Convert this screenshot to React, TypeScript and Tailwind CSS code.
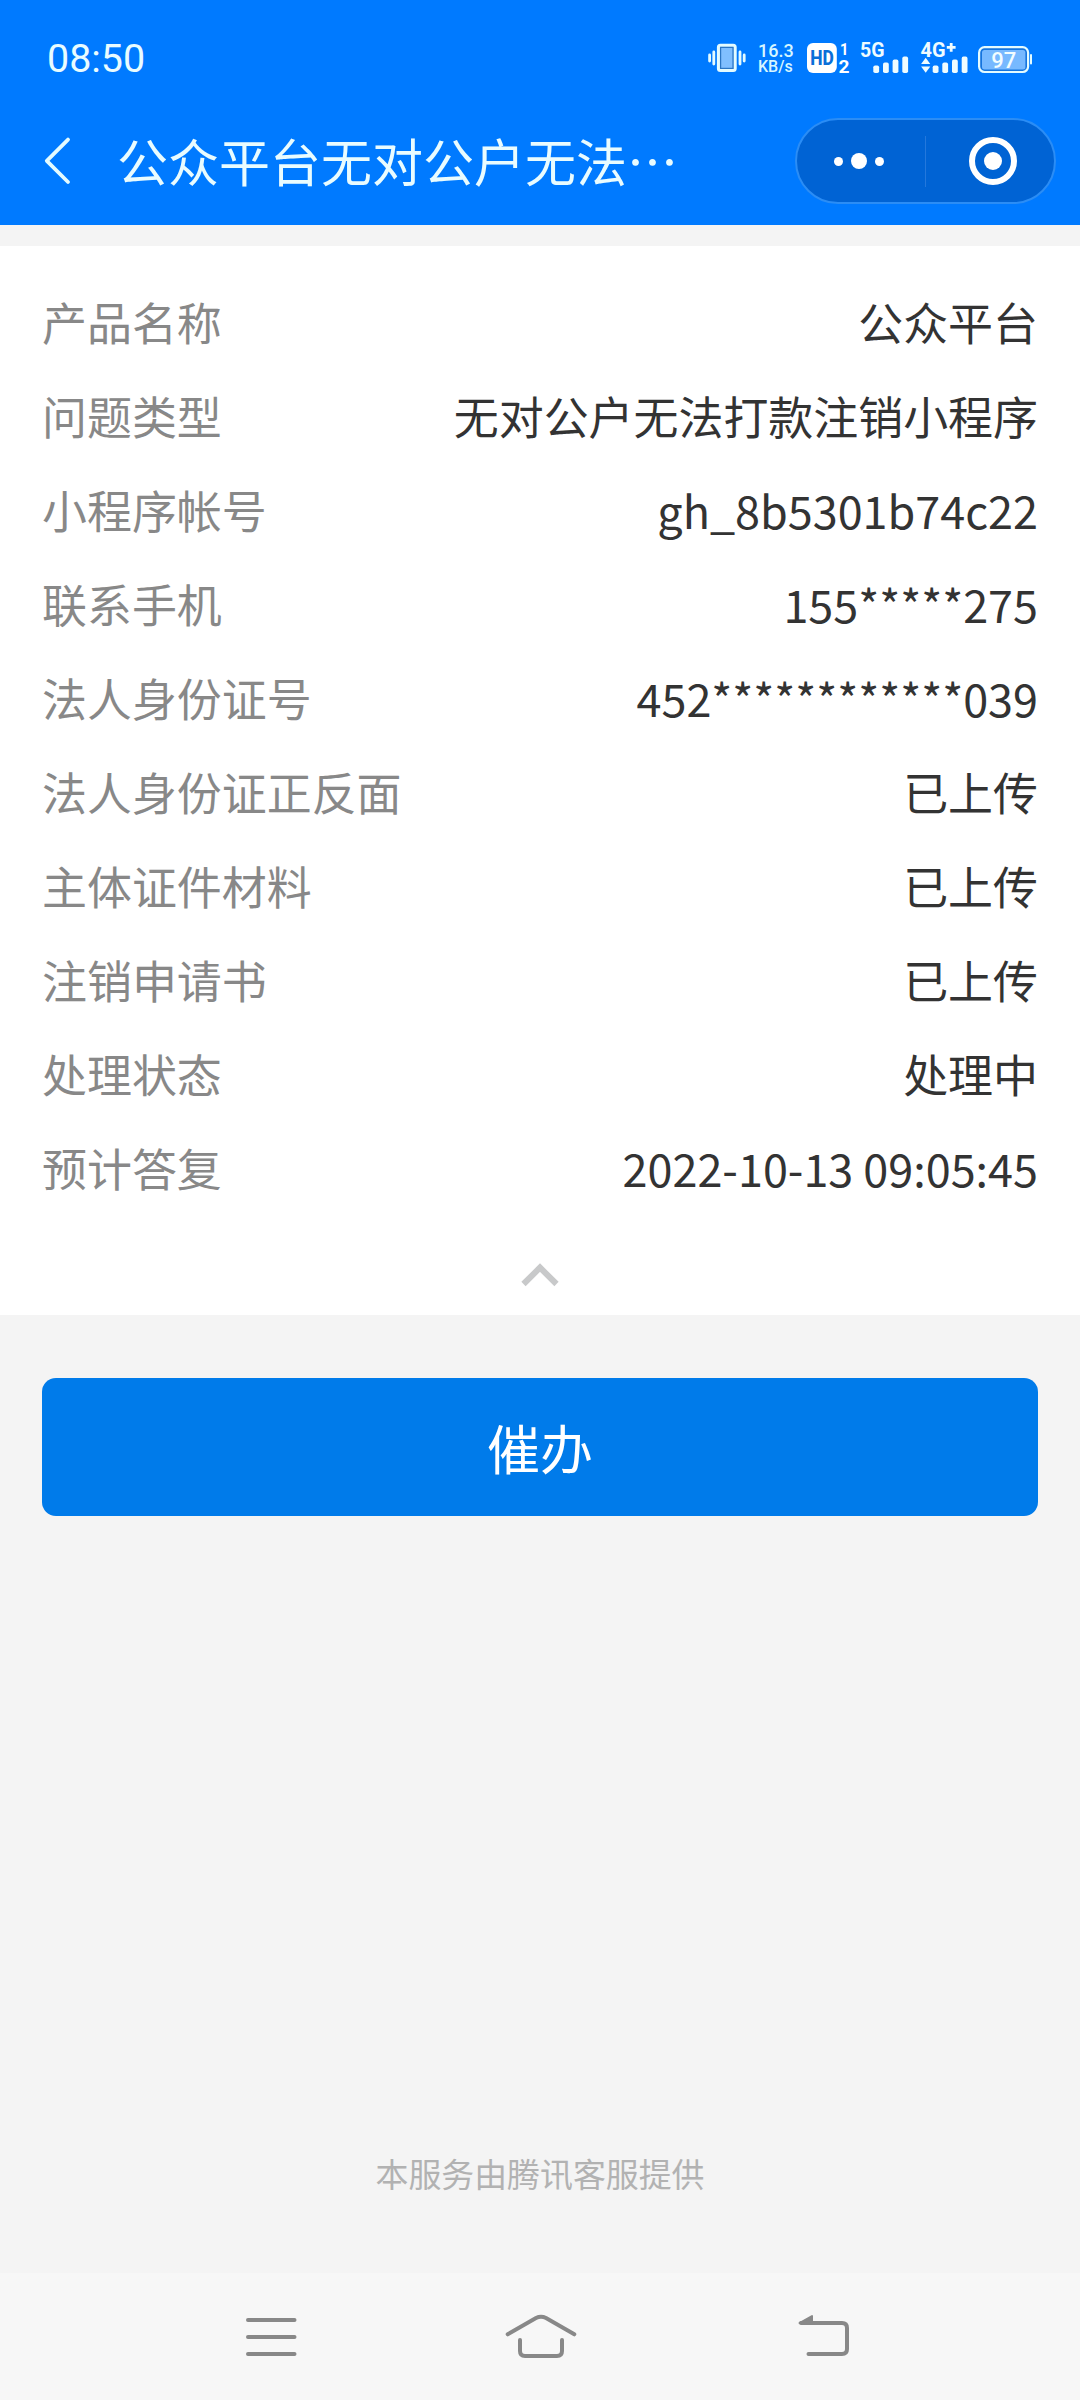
import React from "react";

const rows: [string, string][] = [
  ["产品名称", "公众平台"],
  ["问题类型", "无对公户无法打款注销小程序"],
  ["小程序帐号", "gh_8b5301b74c22"],
  ["联系手机", "155*****275"],
  ["法人身份证号", "452************039"],
  ["法人身份证正反面", "已上传"],
  ["主体证件材料", "已上传"],
  ["注销申请书", "已上传"],
  ["处理状态", "处理中"],
  ["预计答复", "2022-10-13 09:05:45"],
];

function VibrateIcon() {
  return (
    <svg width="38" height="34" viewBox="708 41 38 34" fill="none" stroke="#e3fbff">
      <rect x="718.4" y="45.2" width="16.8" height="25.4" rx="2" fill="#80bfff" strokeWidth="3" />
      <rect x="720.6" y="47.4" width="12.4" height="21" stroke="#2b76c4" strokeWidth="1.2" />
      <path d="M713.8 52v12M740 52v12M709.6 55v6M744.2 55v6" strokeWidth="2.8" strokeLinecap="round" />
    </svg>
  );
}

function HdIcon() {
  return (
    <svg width="44" height="34" viewBox="806 41 44 34" className="overflow-visible font-['Roboto',sans-serif] font-bold">
      <rect x="807" y="43" width="29.8" height="30" rx="6" fill="#fff" />
      <text x="810.2" y="65.2" fontSize="20" fontWeight="800" textLength="23.6" lengthAdjust="spacingAndGlyphs" fill="#0a6fd8">HD</text>
      <text x="840" y="55.2" fontSize="17" fill="#fff" textLength="8.5" lengthAdjust="spacingAndGlyphs">1</text>
      <text x="838.4" y="72.8" fontSize="17.5" fill="#fff" textLength="11" lengthAdjust="spacingAndGlyphs">2</text>
    </svg>
  );
}

function SignalFiveG() {
  return (
    <svg width="50" height="34" viewBox="859 41 50 34" fill="#effcff" className="overflow-visible font-['Roboto',sans-serif] font-bold">
      <text x="860" y="57.2" fontSize="19.5" textLength="24.5" lengthAdjust="spacingAndGlyphs">5G</text>
      <rect x="873.3" y="65.5" width="5.8" height="7.5" rx="1.8" />
      <rect x="883" y="62.6" width="5.8" height="10.4" rx="1.8" />
      <rect x="892.6" y="59.6" width="5.8" height="13.4" rx="1.8" />
      <rect x="902.3" y="56.6" width="5.8" height="16.4" rx="1.8" />
    </svg>
  );
}

function SignalFourG() {
  return (
    <svg width="49" height="34" viewBox="920 41 49 34" fill="#effcff" className="overflow-visible font-['Roboto',sans-serif] font-bold">
      <text x="920.6" y="57.2" fontSize="19.5" textLength="25" lengthAdjust="spacingAndGlyphs">4G</text>
      <path d="M946.8 47.4h8.800M951.200 43v8.800" stroke="#effcff" strokeWidth="2.8" />
      <path d="M925.7 57.8l4.6 6.2h-9.2zM925.7 72.8l4.6-6.400h-9.200z" />
      <rect x="932.7" y="65.5" width="5.8" height="7.5" rx="1.8" />
      <rect x="942.3" y="62.6" width="5.8" height="10.4" rx="1.8" />
      <rect x="952" y="59.6" width="5.8" height="13.4" rx="1.8" />
      <rect x="961.7" y="56.6" width="5.8" height="16.4" rx="1.8" />
    </svg>
  );
}

function BatteryIcon() {
  return (
    <svg width="56" height="34" viewBox="977 41 56 34" className="overflow-visible font-['Roboto',sans-serif] font-medium">
      <rect x="979.1" y="47.2" width="49" height="24.8" rx="5.5" fill="#1574de" stroke="#e3fbff" strokeWidth="2.2" />
      <rect x="982" y="50" width="43.4" height="19.4" rx="2.5" fill="#77b9ff" />
      <path d="M1031 55v8.4" stroke="#e3fbff" strokeWidth="2" strokeLinecap="round" />
      <text x="1003.7" y="68" fontSize="22" textAnchor="middle" fill="#f2fdff">97</text>
    </svg>
  );
}

export default function App() {
  return (
    <div className="flex h-[2400px] w-[1080px] flex-col overflow-hidden bg-[#f4f4f4] font-['Noto_Sans_CJK_SC',sans-serif]">
      <header className="h-[225px] bg-[#007aff] text-[#e9fcff]">
        <div className="flex h-[98px] items-start justify-between pl-[47px] pr-[47px] pt-[41px]">
          <div className="mt-px font-['Roboto',sans-serif] text-[39.4px] leading-[34px]">08:50</div>
          <div className="flex items-center">
            <VibrateIcon />
            <div className="ml-[12px] mr-[11px] flex h-[34px] w-[37px] flex-col whitespace-nowrap font-['Roboto',sans-serif] font-medium text-[#d6f6ff]">
              <span className="mt-px text-[18px] leading-[17px]">16.3</span>
              <span className="text-[16px] leading-[16px]">KB/s</span>
            </div>
            <HdIcon />
            <div className="ml-[9px] flex">
              <SignalFiveG />
            </div>
            <div className="ml-[11px] flex">
              <SignalFourG />
            </div>
            <div className="ml-2 flex">
              <BatteryIcon />
            </div>
          </div>
        </div>
        <div className="flex h-[126px] items-center pl-11 pr-6">
          <svg width="28" height="50" viewBox="44 136 28 50" fill="none" stroke="#e3fbff" strokeWidth="3.8" strokeLinecap="round" strokeLinejoin="round">
            <path d="M68 139.6 46.8 160.8 68 182" />
          </svg>
          <h1 className="mb-[3px] ml-[45px] flex-1 whitespace-nowrap text-[51px] leading-[60px]">公众平台无对公户无法…</h1>
          <div className="flex h-[86px] w-[261px] items-center rounded-full border-2 border-[#2b8df5] bg-[#0063d4]">
            <div className="flex w-[128px] items-center justify-center gap-2 pr-1">
              <span className="size-[9px] rounded-full bg-white" />
              <span className="size-4 rounded-full bg-white" />
              <span className="size-[9px] rounded-full bg-white" />
            </div>
            <span className="h-[51px] w-px bg-[#2478dc]" />
            <div className="flex flex-1 items-center justify-center pl-1.5">
              <span className="flex size-12 items-center justify-center rounded-full border-[6px] border-white">
                <span className="size-[18px] rounded-full bg-white" />
              </span>
            </div>
          </div>
        </div>
      </header>

      <section className="mt-[21px] flex h-[1069px] flex-col bg-white px-[42px] pt-[29px] text-[44.95px]">
        {rows.map(([label, value]) => (
          <div key={label} className="flex h-[94px] items-center justify-between whitespace-nowrap leading-[60px]">
            <span className="text-[#888888]">{label}</span>
            <span className="text-[#333333]">{value}</span>
          </div>
        ))}
        <svg className="mt-[47px] self-center" width="38" height="26" viewBox="0 0 38 26" fill="none" stroke="#c8c9ca" strokeWidth="6">
          <path d="M2.500 22 19 5.600 35.500 22" />
        </svg>
      </section>

      <button className="mx-[42px] mt-[63px] h-[138px] rounded-[14px] bg-[#007bea] pt-[2px] text-[53px] text-white">催办</button>

      <footer className="mt-auto">
        <p className="mb-[76px] text-center text-[32.9px] leading-[48px] text-[#b2b2b2]">本服务由腾讯客服提供</p>
        <nav className="flex h-[127px] items-start bg-[#f7f7f7] pl-[244px] pt-[40px]">
          <svg width="54" height="48" viewBox="244 2313 54 48" stroke="#888" strokeWidth="4" strokeLinecap="round">
            <path d="M248 2320h46.500M248 2337h46.500M248 2354h46.500" />
          </svg>
          <svg className="ml-[206px]" width="74" height="48" viewBox="504 2313 74 48" fill="none" stroke="#888" strokeWidth="4" strokeLinecap="round" strokeLinejoin="round">
            <path d="M507.700 2334.300 536 2318Q541 2315.500 546 2318L574.300 2334.300" />
            <path d="M520 2340v11q0 5 5 5h32q5 0 5-5v-11" />
          </svg>
          <svg className="ml-[218px]" width="56" height="48" viewBox="796 2313 56 48" fill="none" stroke="#888" strokeWidth="4" strokeLinecap="round">
            <path d="M801 2323h41q5 0 5 5v21q0 5-5 5h-33.500" />
            <path d="M799.500 2323 812 2316v7z" fill="#888" strokeWidth="2" strokeLinejoin="round" />
          </svg>
        </nav>
      </footer>
    </div>
  );
}
